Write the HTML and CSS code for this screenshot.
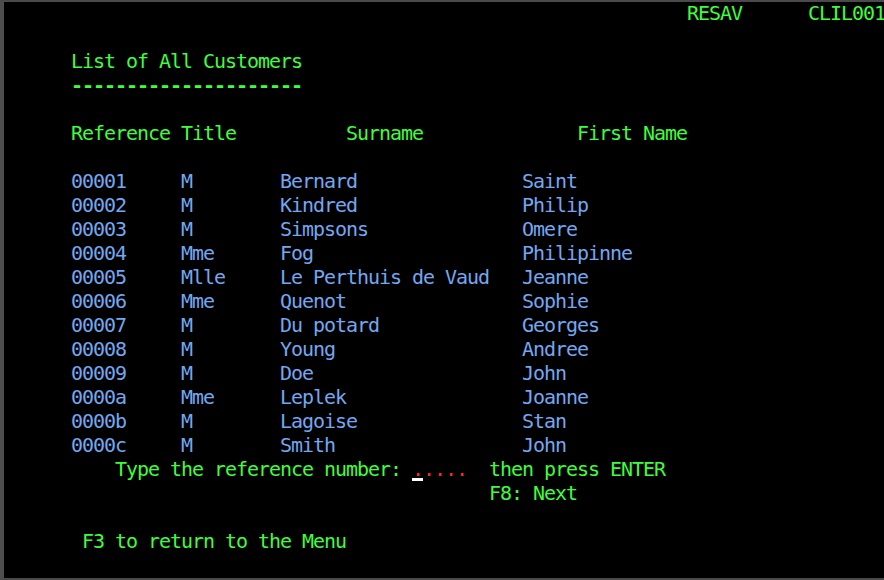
FILE: index.html
```html
<!DOCTYPE html>
<html>
<head>
<meta charset="utf-8">
<link rel="stylesheet" href="styles.css">
</head>
<body>
<div class="screen">
<div class="row g">                                                              RESAV      CLIL001</div>
<div class="row"> </div>
<div class="row g">      List of All Customers</div>
<div class="row g dash">      ---------------------</div>
<div class="row"> </div>
<div class="row g">      Reference Title          Surname              First Name</div>
<div class="row"> </div>
<div class="row b">      00001     M        Bernard               Saint</div>
<div class="row b">      00002     M        Kindred               Philip</div>
<div class="row b">      00003     M        Simpsons              Omere</div>
<div class="row b">      00004     Mme      Fog                   Philipinne</div>
<div class="row b">      00005     Mlle     Le Perthuis de Vaud   Jeanne</div>
<div class="row b">      00006     Mme      Quenot                Sophie</div>
<div class="row b">      00007     M        Du potard             Georges</div>
<div class="row b">      00008     M        Young                 Andree</div>
<div class="row b">      00009     M        Doe                   John</div>
<div class="row b">      0000a     Mme      Leplek                Joanne</div>
<div class="row b">      0000b     M        Lagoise               Stan</div>
<div class="row b">      0000c     M        Smith                 John</div>
<div class="row g">          Type the reference number: <span class="field"><span class="cur">.</span>....</span>  then press ENTER</div>
<div class="row g">                                            F8: Next</div>
<div class="row"> </div>
<div class="row g">       F3 to return to the Menu</div>
</div>
</body>
</html>
```
FILE: styles.css
```css
html, body {
  margin: 0;
  padding: 0;
  background: #000;
}
.screen {
  box-sizing: border-box;
  width: 884px;
  height: 580px;
  background: #000;
  border-top: 2px solid #4a4a4a;
  border-left: 4px solid #4d4d4d;
  border-bottom: 2px solid #4a4a4a;
  padding-left: 1px;
  overflow: hidden;
  font-family: "DejaVu Sans Mono", monospace;
  font-size: 20px;
  letter-spacing: -1.04px;
}
.row {
  height: 24px;
  line-height: 24px;
  white-space: pre;
}
.row:first-child {
  margin-top: -1px;
}
.g { color: #3cff3c; }
.b { color: #70a8f2; }
.dash { font-weight: bold; }
.field { color: #ff2a2a; }
.cur {
  position: relative;
}
.cur::after {
  content: "";
  position: absolute;
  left: 0;
  width: 11px;
  top: 21px;
  height: 3px;
  background: #fff;
}
```
